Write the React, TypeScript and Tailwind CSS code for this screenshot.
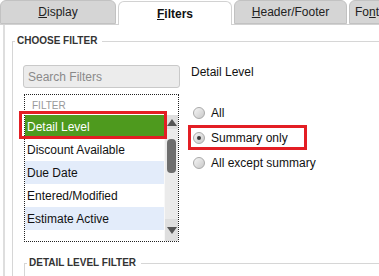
import React from "react";

const filters = [
  { name: "Detail Level", bg: "bg-[#4e9a1e] text-white" },
  { name: "Discount Available", bg: "bg-white" },
  { name: "Due Date", bg: "bg-[#e3ecfa]" },
  { name: "Entered/Modified", bg: "bg-white" },
  { name: "Estimate Active", bg: "bg-[#e3ecfa]" },
];

const levels = [
  { name: "All", checked: false },
  { name: "Summary only", checked: true },
  { name: "All except summary", checked: false },
];

function Tab({ width, active, children }: { width: string; active?: boolean; children: React.ReactNode }) {
  return (
    <div
      className={
        active
          ? `${width} h-[24px] shrink-0 rounded-t-[6px] border border-b-0 border-[#d2d2d2] bg-white flex items-center justify-center font-bold text-[#111] relative top-px`
          : `${width} h-[24px] shrink-0 rounded-t-[6px] border border-[#c2c2c2] bg-[#d5d5d5] flex items-center justify-center text-[#222]`
      }
    >
      {children}
    </div>
  );
}

function Radio({ checked }: { checked: boolean }) {
  return (
    <div className="w-[12px] h-[12px] rounded-full border border-[#a9a9a9] bg-linear-to-br from-[#f6f6f6] to-[#c9c9c9] flex items-center justify-center">
      {checked && <div className="w-[4px] h-[4px] rounded-full bg-[#3a3a3a]" />}
    </div>
  );
}

export default function App() {
  return (
    <div className="w-[379px] h-[276px] overflow-hidden bg-white text-[12px] text-[#111] font-[Liberation_Sans,Arial,sans-serif]">
      {/* tabs */}
      <div className="flex h-[25px] items-end gap-[2px] border-b border-[#d2d2d2] whitespace-nowrap">
        <Tab width="w-[116px]">
          <span><span className="underline">D</span>isplay</span>
        </Tab>
        <Tab width="w-[114px]" active>
          <span><span className="underline">F</span>ilters</span>
        </Tab>
        <Tab width="w-[113px]">
          <span><span className="underline">H</span>eader/Footer</span>
        </Tab>
        <div className="w-[60px] h-[24px] shrink-0 rounded-t-[6px] border border-[#c2c2c2] bg-[#d5d5d5] flex items-center pl-[5px] text-[#222]">
          <span>Fo<span className="underline">n</span>ts</span>
        </div>
      </div>

      {/* panel */}
      <div className="ml-[3px] h-[251px] border-l-2 border-[#dedede] pt-[10px]">
        <fieldset className="ml-[7px] w-[420px] m-0 p-0 border-0 border-t border-l border-[#d6d6d6]">
          <legend className="ml-[2px] pl-[2px] pr-[5px] text-[10px] leading-[12px] font-bold text-[#333]">CHOOSE FILTER</legend>
          <div className="pl-[10px]">
            <div className="flex">
              {/* left column */}
              <div className="w-[157px] pt-[18px]">
                <div className="h-[23px] rounded-[3px] border border-[#c9c9c9] bg-[#ececec] flex items-center pl-[4px] text-[#8a8a8a]">
                  Search Filters
                </div>
                <div className="mt-[6px] ml-[1px] w-[155px] border border-dotted border-[#222]">
                  <div className="h-[20px] flex items-center pl-[7px] text-[10px] text-[#999]">FILTER</div>
                  <div className="flex h-[126px]">
                    <div className="flex-1">
                      {filters.map((f, i) => (
                        <div key={f.name} className={`relative h-[23px] flex items-center pl-[2px] ${f.bg}`}>
                          {f.name}
                          {i === 0 && (
                            <div className="absolute -left-[6px] -top-[4px] w-[148px] h-[28px] border-[3px] border-[#e31e24] z-10" />
                          )}
                        </div>
                      ))}
                    </div>
                    <div className="w-[14px] flex flex-col bg-[#ebebeb] border-l border-[#f8f8f8]">
                      <div className="h-[14px] bg-[#dedede] flex items-center justify-center">
                        <div className="w-0 h-0 border-x-[5px] border-x-transparent border-b-[7px] border-b-[#555]" />
                      </div>
                      <div className="flex-1">
                        <div className="mt-[10px] mx-auto w-[9px] h-[34px] rounded-[4px] bg-[#6e6e6e]" />
                      </div>
                      <div className="h-[22px] bg-[#dedede] flex items-center justify-center">
                        <div className="w-0 h-0 border-x-[5px] border-x-transparent border-t-[7px] border-t-[#555]" />
                      </div>
                    </div>
                  </div>
                </div>
              </div>

              {/* right column */}
              <div className="ml-[11px] pt-[17px]">
                <div className="leading-[16px]">Detail Level</div>
                <div className="mt-[20px]">
                  {levels.map((l) => (
                    <div key={l.name} className="relative h-[25px] flex items-center gap-[6px] pl-[2px]">
                      <Radio checked={l.checked} />
                      <span>{l.name}</span>
                      {l.checked && (
                        <div className="absolute -left-[3px] top-0 w-[119px] h-[25px] border-[3px] border-[#e31e24]" />
                      )}
                    </div>
                  ))}
                </div>
              </div>
            </div>

            <fieldset className="mt-[15px] ml-[1px] m-0 p-0 h-[40px] border-0 border-t border-l border-[#d6d6d6]">
              <legend className="ml-[2px] pl-[2px] pr-[5px] text-[10px] leading-[12px] font-bold text-[#333]">DETAIL LEVEL FILTER</legend>
            </fieldset>
          </div>
        </fieldset>
      </div>
    </div>
  );
}
